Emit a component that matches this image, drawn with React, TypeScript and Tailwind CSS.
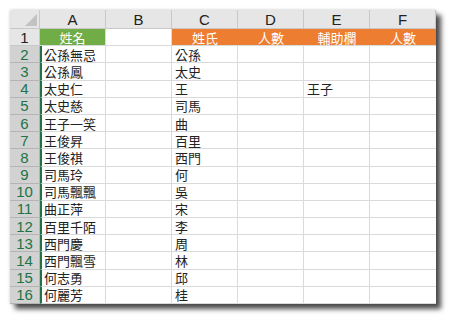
import React from 'react';

const colLetters = ['A', 'B', 'C', 'D', 'E', 'F'];

// 2〜16行目のデータ（A列・C列・E列）
const names = ['公孫無忌', '公孫鳳', '太史仁', '太史慈', '王子一笑', '王俊昇', '王俊祺', '司馬玲', '司馬飄飄', '曲正萍', '百里千陌', '西門慶', '西門飄雪', '何志勇', '何麗芳'];
const surnames = ['公孫', '太史', '王', '司馬', '曲', '百里', '西門', '何', '吳', '宋', '李', '周', '林', '邱', '桂'];
const helper: Record<number, string> = { 4: '王子' };

const cjk = "font-['Noto_Sans_CJK_TC','Noto_Sans_CJK_JP',sans-serif]";

export default function App() {
  return (
    <div className="w-[454px] h-[321px] bg-white pt-[10px] pl-[10px]">
      <div className="w-[426px] bg-white shadow-[5px_5px_5px_rgba(0,0,0,0.7),0_0_3px_rgba(0,0,0,0.2)]">
        <div className="grid grid-cols-[30px_repeat(6,66px)] grid-rows-[19px_repeat(16,17.1875px)]">
          {/* 左上の全選択セル */}
          <div className="bg-[#e6e6e6] border-r border-b border-[#c8c8c8] flex items-end justify-end p-[2px]">
            <svg width="12" height="12" viewBox="0 0 12 12">
              <polygon points="12,0 12,12 0,12" fill="#c2c2c2" />
            </svg>
          </div>
          {colLetters.map((c) => (
            <div
              key={c}
              className="bg-[#e6e6e6] border-r border-b border-[#c8c8c8] flex items-center justify-center text-[15px] leading-none text-[#222] font-['Liberation_Sans',sans-serif]"
            >
              {c}
            </div>
          ))}

          {/* 1行目：見出し */}
          <div className="bg-[#e6e6e6] border-r border-b border-[#c8c8c8] flex items-center justify-center text-[15px] leading-none text-[#222] font-['Liberation_Sans',sans-serif]">
            1
          </div>
          <div className={`bg-[#70ad47] border-r border-b border-[#dadada] flex items-center justify-center text-white text-[13px] leading-none ${cjk}`}>姓名</div>
          <div className="border-r border-b border-[#dadada]"></div>
          {['姓氏', '人數', '輔助欄', '人數'].map((h, i) => (
            <div key={i} className={`bg-[#ed7d31] border-b border-[#dadada] flex items-center justify-center text-white text-[13px] leading-none ${cjk}`}>
              {h}
            </div>
          ))}

          {names.map((name, i) => {
            const row = i + 2;
            return (
              <React.Fragment key={row}>
                <div className="bg-[#d2d2d2] border-r border-b border-[#b4b4b4] flex items-center justify-center text-[15px] leading-none text-[#217346] font-['Liberation_Sans',sans-serif]">
                  {row}
                </div>
                <div className={`border-l-2 border-l-[#217346] border-r border-b border-[#dadada] pl-[2px] flex items-center text-[13px] leading-none text-[#222] whitespace-nowrap overflow-hidden ${cjk}`}>
                  {name}
                </div>
                <div className="border-r border-b border-[#dadada]"></div>
                <div className={`border-r border-b border-[#dadada] pl-[3px] flex items-center text-[13px] leading-none text-[#222] ${cjk}`}>{surnames[i]}</div>
                <div className="border-r border-b border-[#dadada]"></div>
                <div className={`border-r border-b border-[#dadada] pl-[3px] flex items-center text-[13px] leading-none text-[#222] ${cjk}`}>{helper[row] || ''}</div>
                <div className="border-b border-[#dadada]"></div>
              </React.Fragment>
            );
          })}
        </div>
      </div>
    </div>
  );
}
